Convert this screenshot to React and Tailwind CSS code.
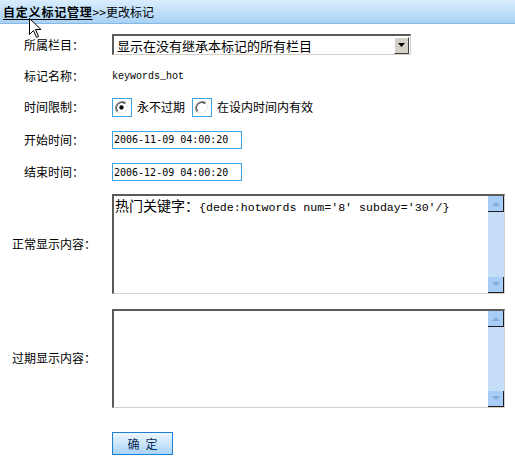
import React from 'react';

const cjk = '"Noto Sans CJK SC", "Liberation Sans", sans-serif';

function RadioBox({ checked }) {
  return (
    <span className="inline-flex h-[19px] w-[20px] items-start justify-start border border-[#3da3e6] bg-white pl-[2px] pt-[2px]">
      <svg width="13" height="13" viewBox="0 0 12 12">
        <path d="M10.2 1.8A6 6 0 0 0 1.8 10.2" stroke="#808080" strokeWidth="1" fill="none" />
        <path d="M9.3 2.7A4.7 4.7 0 0 0 2.7 9.3" stroke="#404040" strokeWidth="1" fill="none" />
        <path d="M1.8 10.2A6 6 0 0 0 10.2 1.8" stroke="#e8e8e8" strokeWidth="1" fill="none" />
        <circle cx="6" cy="6" r="4" fill="#fff" />
        {checked && <circle cx="6" cy="6" r="2" fill="#000" />}
      </svg>
    </span>
  );
}

function ScrollBar() {
  return (
    <div className="flex h-full w-[16px] shrink-0 flex-col">
      <div className="flex h-[16px] items-center justify-center border-r border-b border-[#1c1c1c] bg-[#a8cdf6]">
        <svg width="8" height="5" viewBox="0 0 8 5">
          <path d="M0 5 L4 1 L8 5 Z" fill="#86a8d6" />
        </svg>
      </div>
      <div className="flex-1 bg-[#c6ddf7]" />
      <div className="flex h-[16px] items-center justify-center border-r border-b border-[#1c1c1c] bg-[#a8cdf6]">
        <svg width="8" height="5" viewBox="0 0 8 5">
          <path d="M0 0 L4 4 L8 0 Z" fill="#86a8d6" />
        </svg>
      </div>
    </div>
  );
}

function TextBox({ height, children }) {
  return (
    <div className={`flex w-[393px] border-t-2 border-l-2 border-b border-r border-t-[#5a5a5a] border-l-[#5a5a5a] border-b-[#d4d0c8] border-r-[#d4d0c8] bg-white ${height}`}>
      <div className="flex-1 overflow-hidden pl-[1px] leading-[17px] text-black">{children}</div>
      <ScrollBar />
    </div>
  );
}

function Row({ label, h, children }) {
  return (
    <div className={`flex items-center ${h}`}>
      <div className="w-[108px] shrink-0 text-center text-[12px] text-black" style={{ fontFamily: cjk }}>
        {label}
      </div>
      <div className="ml-[4px] flex items-center">{children}</div>
    </div>
  );
}

export default function App() {
  return (
    <div className="relative h-[472px] w-[515px] overflow-hidden bg-white" style={{ fontFamily: cjk }}>
      {/* breadcrumb bar */}
      <div className="flex h-[24px] items-center border-b border-[#84b9e4] bg-gradient-to-b from-[#d9edfd] to-[#a8d2f5] pl-[3px] text-[12px] text-black">
        <span className="font-bold tracking-[0.8px] underline underline-offset-2">自定义标记管理</span>
        <span>&gt;&gt;更改标记</span>
      </div>

      <div className="flex flex-col pt-[4px]">
        <Row label="所属栏目：" h="h-[33px]">
          <div className="flex h-[21px] w-[299px] items-center border-t-2 border-l-2 border-b border-r border-t-[#5a5a5a] border-l-[#5a5a5a] border-b-[#d4d0c8] border-r-[#d4d0c8] bg-white">
            <span className="flex-1 pl-[3px] text-[13px] leading-[17px]">显示在没有继承本标记的所有栏目</span>
            <span className="mr-[1px] flex h-[17px] w-[15px] items-center justify-center border-t border-l border-b border-r border-t-white border-l-white border-b-[#404040] border-r-[#404040] bg-[#d4d0c8]">
              <svg width="7" height="4" viewBox="0 0 7 4">
                <path d="M0 0 H7 L3.5 4 Z" fill="#000" />
              </svg>
            </span>
          </div>
        </Row>

        <Row label="标记名称：" h="h-[30px]">
          <span className="text-[10px] text-black" style={{ fontFamily: '"Liberation Mono", monospace' }}>
            keywords_hot
          </span>
        </Row>

        <Row label="时间限制：" h="h-[32px]">
          <RadioBox checked />
          <span className="ml-[5px] text-[12px]">永不过期</span>
          <span className="ml-[7px]">
            <RadioBox />
          </span>
          <span className="ml-[5px] text-[12px]">在设内时间内有效</span>
        </Row>

        <Row label="开始时间：" h="h-[33px]">
          <div className="flex h-[18px] w-[130px] items-center border border-[#3da3e6] bg-white pl-[1px] text-[10px]" style={{ fontFamily: '"DejaVu Sans Mono", monospace' }}>
            2006-11-09 04:00:20
          </div>
        </Row>

        <Row label="结束时间：" h="h-[32px]">
          <div className="flex h-[18px] w-[130px] items-center border border-[#3da3e6] bg-white pl-[1px] text-[10px]" style={{ fontFamily: '"DejaVu Sans Mono", monospace' }}>
            2006-12-09 04:00:20
          </div>
        </Row>

        <Row label="正常显示内容：" h="h-[112px]">
          <TextBox height="h-[100px]">
            <span className="text-[14px]">热门关键字：</span>
            <span className="text-[11.6px]" style={{ fontFamily: '"Liberation Mono", monospace' }}>
              {"{dede:hotwords num='8' subday='30'/}"}
            </span>
          </TextBox>
        </Row>

        <Row label="过期显示内容：" h="h-[116px]">
          <TextBox height="h-[99px]">{null}</TextBox>
        </Row>

        <div className="flex pt-[16px] pl-[112px]">
          <button className="flex h-[23px] w-[61px] items-center justify-center gap-[6px] border border-[#1f7fd0] bg-gradient-to-b from-[#eef7ff] to-[#a9d3f7] text-[12px] text-[#0a2a55]">
            <span>确</span>
            <span>定</span>
          </button>
        </div>
      </div>

      {/* mouse pointer */}
      <svg className="absolute left-[29px] top-[18px]" width="13" height="21" viewBox="0 0 13 21">
        <path d="M0.5 0.5 V16.5 L4.5 12.5 L7.5 19.5 L9.5 18.5 L6.5 11.5 H12 Z" fill="#fff" stroke="#000" strokeWidth="1" />
      </svg>
    </div>
  );
}
